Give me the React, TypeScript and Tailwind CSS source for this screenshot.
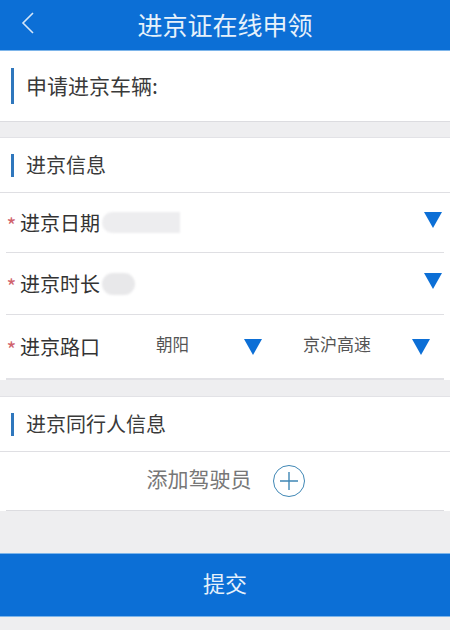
const font = { fontFamily: '"Noto Sans CJK SC", "Noto Sans", sans-serif' };

function Arrow({ className }: { className?: string }) {
  return (
    <svg viewBox="0 0 18 16" className={`h-4 w-[18px] shrink-0 ${className ?? ""}`}>
      <path d="M0 0H18L9 16Z" fill="#0c6fd6" />
    </svg>
  );
}

function SectionTitle({ title }: { title: string }) {
  return (
    <div className="flex h-[55px] items-center border-b border-[#dfdfe3] pl-[11px]">
      <div className="h-[23px] w-[3px] bg-[#2f77bd]" />
      <span className="ml-3 text-[20px] text-[#3a3a3a]">{title}</span>
    </div>
  );
}

function Label({ text }: { text: string }) {
  return (
    <>
      <span className="w-[11px] pt-[5px] text-center text-[21px] leading-none text-[#d0636c]">*</span>
      <span className="ml-[3px] text-[20px] text-[#333]">{text}</span>
    </>
  );
}

export default function App() {
  return (
    <div className="flex h-[630px] w-[450px] flex-col overflow-hidden bg-[#eeeef0]" style={font}>
      {/* Header */}
      <div className="relative flex h-[51px] shrink-0 items-center justify-center border-b border-[#7db5ea] bg-[#0c6fd6]">
        <svg viewBox="0 0 14 24" className="absolute left-[21px] top-[11px] h-6 w-[14px]">
          <path d="M12 2 2 12l10 10" fill="none" stroke="#d5e6f8" strokeWidth="1.6" />
        </svg>
        <span className="text-[25px] text-[#e6f1fb]">进京证在线申领</span>
      </div>

      {/* Vehicle */}
      <div className="flex h-[71px] shrink-0 items-center border-b border-[#dcdce0] bg-white pl-[11px]">
        <div className="h-9 w-[3px] bg-[#2f77bd]" />
        <span className="ml-3 text-[21px] text-[#3a3a3a]">申请进京车辆:</span>
      </div>

      {/* Entry info */}
      <div className="mt-[15px] shrink-0 border-t border-[#e2e2e6] bg-white">
        <SectionTitle title="进京信息" />
        <div className="mx-[6px]">
          <div className="flex h-[60px] items-center border-b border-[#dfdfe3] pr-[2px]">
            <Label text="进京日期" />
            <div className="ml-[2px] h-[21px] w-[78px] rounded-l-full bg-[#ededef] blur-[1px]" />
            <Arrow className="mb-[5px] ml-auto" />
          </div>
          <div className="flex h-[62px] items-center border-b border-[#dfdfe3] pr-[2px]">
            <Label text="进京时长" />
            <div className="ml-[2px] h-[22px] w-[33px] rounded-full bg-[#e8e8ea] blur-[1px]" />
            <Arrow className="mb-[5px] ml-auto" />
          </div>
          <div className="flex h-[65px] items-center border-b-2 border-[#e2e2e6]">
            <Label text="进京路口" />
            <span className="mb-[5px] ml-[56px] text-[16.5px] text-[#555]">朝阳</span>
            <Arrow className="ml-[55px]" />
            <span className="mb-[5px] ml-[41px] text-[17px] text-[#555]">京沪高速</span>
            <Arrow className="ml-[41px]" />
          </div>
        </div>
      </div>

      {/* Companion info */}
      <div className="mt-[16px] shrink-0 border-t border-[#e2e2e6] bg-white">
        <SectionTitle title="进京同行人信息" />
        <div className="mx-[6px] flex h-[59px] items-center justify-center border-b border-[#dcdce0] pl-[1px]">
          <span className="mb-[4px] text-[21px] text-[#777]">添加驾驶员</span>
          <div className="ml-[21px] flex h-8 w-8 items-center justify-center rounded-full border-[1.5px] border-[#3f87b5]">
            <svg viewBox="0 0 20 20" className="h-5 w-5">
              <path d="M10 1v18M1 10h18" stroke="#3f87b5" strokeWidth="1.4" />
            </svg>
          </div>
        </div>
      </div>

      {/* Submit */}
      <div className="mt-[42px] flex h-[64px] shrink-0 items-center justify-center border-y border-[#7db5ea] bg-[#0c6fd6]">
        <span className="mb-[6px] text-[22px] text-[#e6f1fb]">提交</span>
      </div>
    </div>
  );
}
